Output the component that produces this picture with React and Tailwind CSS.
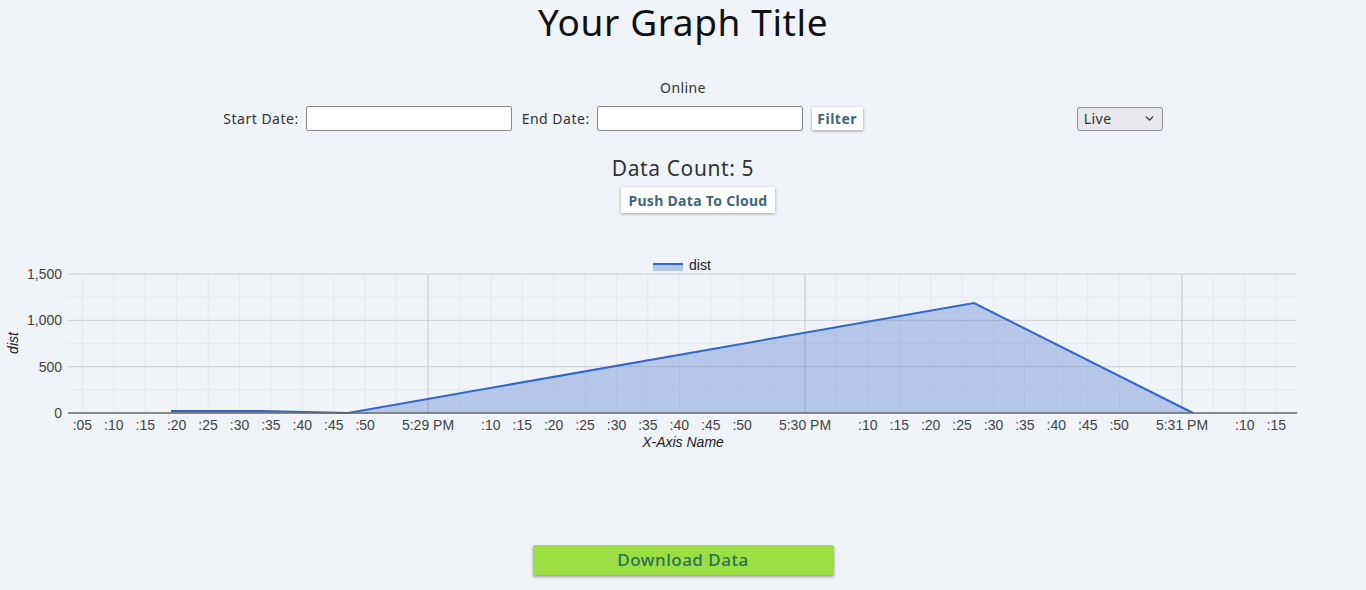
import React from "react";
import { ChevronDown } from "lucide-react";

const X0 = 428; // 5:29 PM
const PX_PER_SEC = 377 / 60;
const xAt = (t) => X0 + (t - 60) * PX_PER_SEC;
const yAt = (v) => 413 - (v * 139) / 1500;

const points = [
  [171, 411],
  [262, 411],
  [348, 413],
  [974, 303],
  [1193, 413],
];

const Chart = () => {
  const ticks = [];
  for (let t = 5; t <= 195; t += 5) ticks.push(t);

  const label = (t) => {
    const s = t % 60;
    if (s === 0) return `5:${28 + t / 60} PM`;
    if (s === 55 || (s === 5 && t > 60)) return null;
    return `:${String(s).padStart(2, "0")}`;
  };

  const line = points.map((p) => p.join(",")).join(" ");
  const area = `${points[0][0]},413 ${line} ${points[points.length - 1][0]},413`;

  return (
    <svg
      width="1366"
      height="210"
      viewBox="0 250 1366 210"
      className="block"
      style={{ fontFamily: "'Liberation Sans', Arial, sans-serif" }}
    >
      {/* minor horizontal */}
      {[250, 750, 1250].map((v) => (
        <line key={v} x1="68" x2="1297" y1={yAt(v)} y2={yAt(v)} stroke="#e6e8eb" />
      ))}
      {/* vertical grid */}
      {ticks.map((t) => (
        <line
          key={t}
          x1={xAt(t)}
          x2={xAt(t)}
          y1="274"
          y2="413"
          stroke={t % 60 === 0 ? "#c4c6c9" : "#e6e8eb"}
        />
      ))}
      {/* major horizontal */}
      {[500, 1000, 1500].map((v) => (
        <line key={v} x1="68" x2="1297" y1={yAt(v)} y2={yAt(v)} stroke="#cfd1d4" />
      ))}

      <polygon points={area} fill="#3366cc" fillOpacity="0.3" />
      <polyline points={line} fill="none" stroke="#3366cc" strokeWidth="2" />
      <line x1="68" x2="1297" y1="413" y2="413" stroke="#666" strokeWidth="1.5" />

      {/* y labels */}
      {[0, 500, 1000, 1500].map((v) => (
        <text key={v} x="62" y={yAt(v) + 5} textAnchor="end" fontSize="14" fill="#444">
          {v.toLocaleString("en-US")}
        </text>
      ))}

      {/* x labels */}
      {ticks.map((t) => {
        const l = label(t);
        if (!l) return null;
        return (
          <text key={t} x={xAt(t)} y="430" textAnchor="middle" fontSize="14" fill="#444">
            {l}
          </text>
        );
      })}

      <text x="683" y="447" textAnchor="middle" fontSize="14" fontStyle="italic" fill="#222">
        X-Axis Name
      </text>
      <text
        x="0"
        y="0"
        transform="translate(18 343) rotate(-90)"
        textAnchor="middle"
        fontSize="14"
        fontStyle="italic"
        fill="#222"
      >
        dist
      </text>

      {/* legend */}
      <rect x="653" y="263" width="30" height="8" fill="#3366cc" fillOpacity="0.3" />
      <line x1="653" x2="683" y1="264" y2="264" stroke="#3366cc" strokeWidth="2" />
      <text x="689" y="270" fontSize="14" fill="#222">
        dist
      </text>
    </svg>
  );
};

const App = () => {
  return (
    <div
      className="w-[1366px] h-[590px] bg-[#f0f3f7] text-[#333] overflow-hidden"
      style={{ fontFamily: "'Noto Sans', 'Open Sans', sans-serif" }}
    >
      <div className="h-[44px] flex items-center justify-center">
        <h1 className="text-[37px] leading-[44px] font-normal text-[#111] tracking-[0.6px]">
          Your Graph Title
        </h1>
      </div>

      <div className="mt-[34px] h-[20px] text-center text-[14px] leading-[20px] tracking-[0.4px]">
        Online
      </div>

      {/* filters */}
      <div className="mt-[8px] h-[25px] flex items-center justify-center pl-[20px] text-[14px] tracking-[0.5px]">
        <span>Start Date:</span>
        <input className="ml-[7px] w-[206px] h-[25px] bg-white border border-[#8a8a8a] rounded-[2px]" />
        <span className="ml-[10px]">End Date:</span>
        <input className="ml-[7px] w-[206px] h-[25px] bg-white border border-[#8a8a8a] rounded-[2px]" />
        <button className="ml-[9px] w-[51px] h-[23px] bg-white font-bold text-[#3f6677] shadow-[0_1px_3px_rgba(0,0,0,0.35)]">
          Filter
        </button>
        <div className="ml-[214px] w-[86px] h-[24px] flex items-center justify-between pl-[6px] pr-[6px] bg-[#e9e9ed] border border-[#8f8f9d] rounded-[3px] text-[#333]">
          <span>Live</span>
          <ChevronDown size={13} strokeWidth={2.5} />
        </div>
      </div>

      <div className="mt-[23px] h-[28px] text-center text-[21px] leading-[28px] tracking-[0.6px]">
        Data Count: 5
      </div>

      <div className="mt-[5px] flex justify-center pl-[30px]">
        <button className="w-[154px] h-[26px] bg-white font-bold text-[14px] tracking-[0.3px] text-[#3f6677] shadow-[0_1px_3px_rgba(0,0,0,0.35)]">
          Push Data To Cloud
        </button>
      </div>

      <div className="mt-[37px]">
        <Chart />
      </div>

      <div className="mt-[85px] flex justify-center">
        <button className="w-[301px] h-[30px] bg-[#9ae043] text-[17px] font-medium tracking-[0.5px] text-[#2e6e5c] shadow-[0_2px_3px_rgba(0,0,0,0.35)] rounded-[2px]">
          Download Data
        </button>
      </div>
    </div>
  );
};

export default App;
